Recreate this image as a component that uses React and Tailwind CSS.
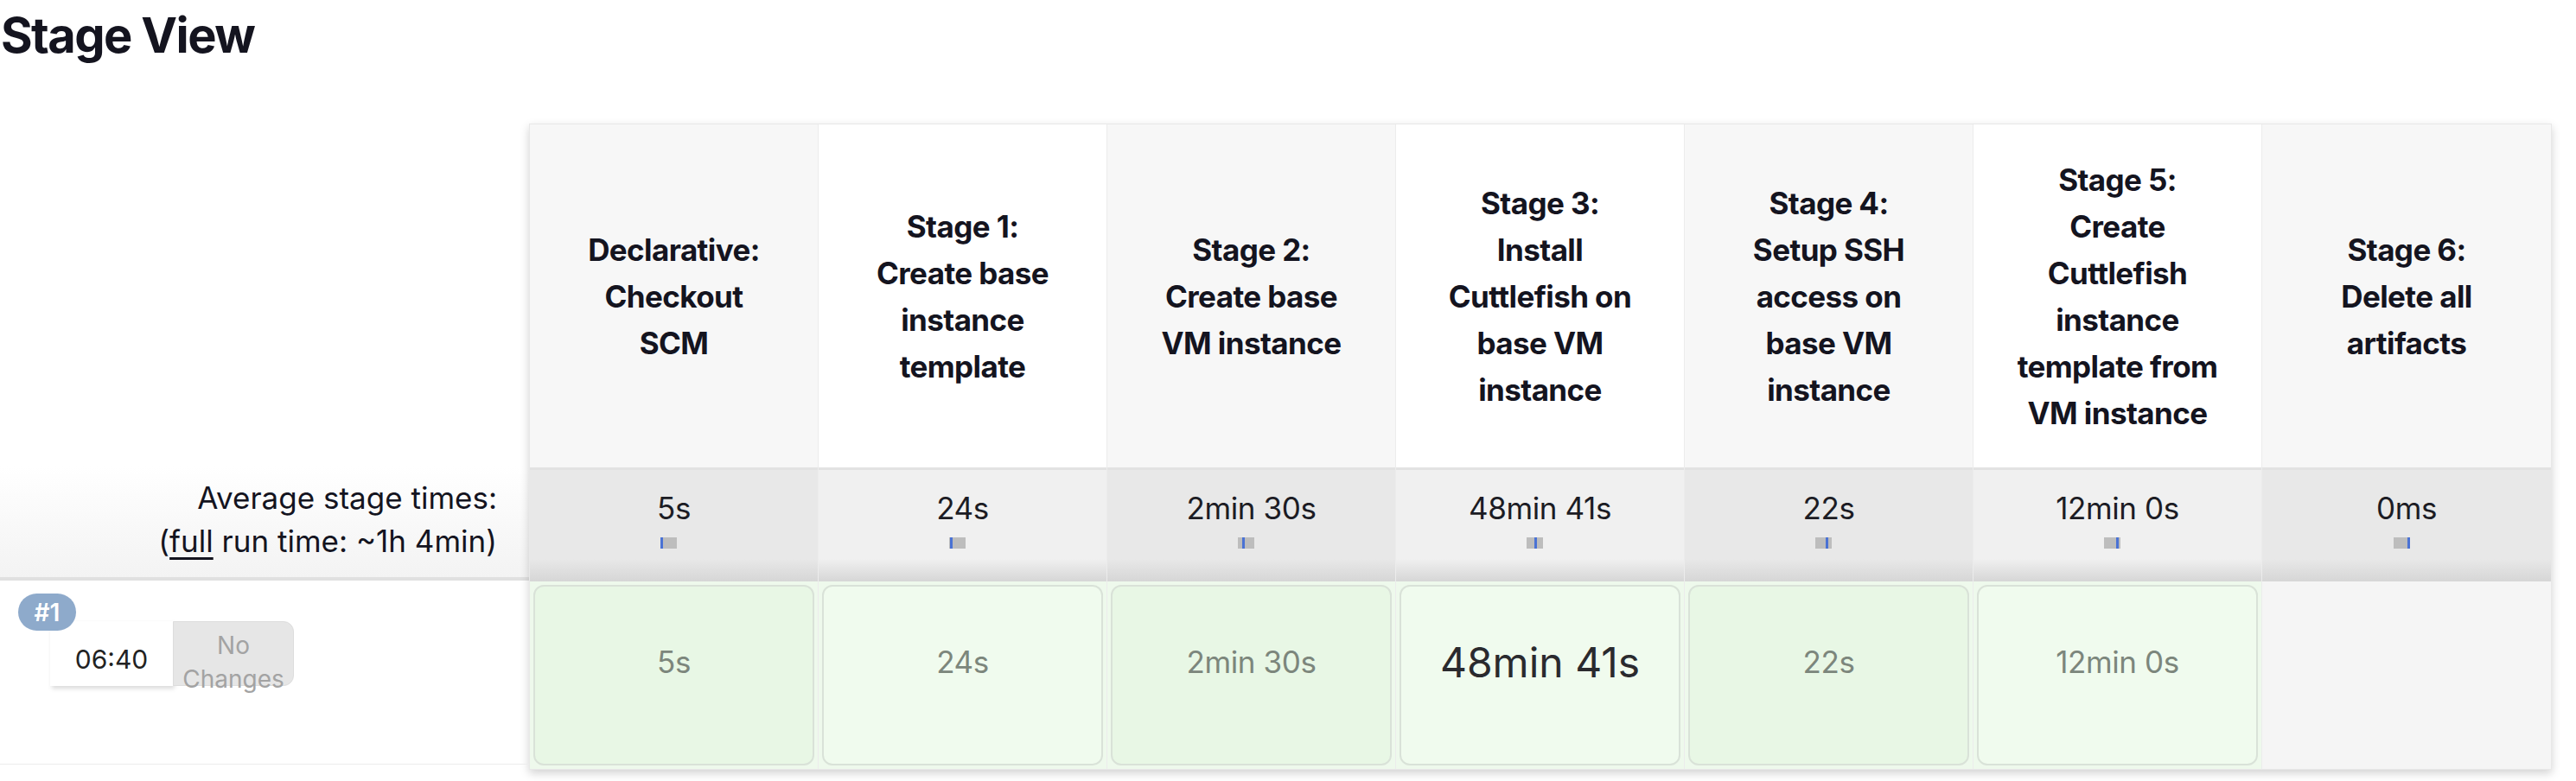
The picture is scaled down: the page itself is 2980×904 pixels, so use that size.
import React from "react";

const stages = [
  { lines: ["Declarative:", "Checkout", "SCM"], avg: "5s", mark: "left-[0px]", run: "5s" },
  { lines: ["Stage 1:", "Create base", "instance", "template"], avg: "24s", mark: "left-[1px]", run: "24s" },
  { lines: ["Stage 2:", "Create base", "VM instance"], avg: "2min 30s", mark: "left-[5px]", run: "2min 30s" },
  { lines: ["Stage 3:", "Install", "Cuttlefish on", "base VM", "instance"], avg: "48min 41s", mark: "left-[9px]", run: "48min 41s", big: true },
  { lines: ["Stage 4:", "Setup SSH", "access on", "base VM", "instance"], avg: "22s", mark: "left-[12px]", run: "22s" },
  { lines: ["Stage 5:", "Create", "Cuttlefish", "instance", "template from", "VM instance"], avg: "12min 0s", mark: "left-[14px]", run: "12min 0s" },
  { lines: ["Stage 6:", "Delete all", "artifacts"], avg: "0ms", mark: "left-[16px]", run: null },
];

function App() {
  return (
    <div className="w-[2980px] h-[904px] bg-white overflow-hidden font-['Inter','Noto_Sans',sans-serif] text-[#14141f]">
      {/* Title */}
      <h2 className="text-[56px] leading-[56px] font-bold tracking-[-1.6px] mt-[13px] ml-[1px]">Stage View</h2>

      <div className="flex mt-[74px]">
        {/* Left labels column */}
        <div className="w-[612px] flex flex-col">
          <div className="h-[397px]" />
          <div className="h-[132px] flex flex-col justify-center items-end pr-[37px] pb-[6px] text-[35px] leading-[50px] bg-gradient-to-b from-white to-[#f3f3f3] border-b-[4px] border-[#e0e0e0]">
            <div>Average stage times:</div>
            <div>
              (<span className="underline underline-offset-[6px] decoration-[3px]">full</span> run time: ~1h 4min)
            </div>
          </div>
          <div className="relative h-[213px] border-b border-[#ececec]">
            <div className="absolute left-[21px] top-[15px] z-10 h-[43px] w-[67px] rounded-full bg-[#8eaacb] text-white text-[28px] font-semibold flex items-center justify-center">
              #1
            </div>
            <div className="absolute left-[58px] top-[47px] flex">
              <div className="w-[142px] h-[75px] bg-white shadow-[2px_3px_5px_rgba(0,0,0,0.15)] flex items-center justify-center pt-[14px] text-[30px] text-[#222]">
                06:40
              </div>
              <div className="w-[140px] h-[75px] bg-[#e6e6e6] rounded-r-[12px] border border-[#dddddd] flex flex-col items-center text-[28px] leading-[39px] text-[#a3a3a3] pt-[8px]">
                <div>No</div>
                <div>Changes</div>
              </div>
            </div>
          </div>
        </div>

        {/* Stage table */}
        <div className="flex shadow-[0_4px_10px_rgba(0,0,0,0.18)] border border-[#e8e8e8]">
          {stages.map((s, i) => {
            const odd = i % 2 === 0;
            return (
              <div key={i} className="w-[334px] flex flex-col border-r border-[#ececec] last:border-r-0">
                <div className={`h-[397px] flex flex-col items-center justify-center text-center text-[35px] leading-[54px] font-bold tracking-[-0.6px] ${odd ? "bg-[#f7f7f7]" : "bg-white"}`}>
                  {s.lines.map((l, j) => (
                    <div key={j}>{l}</div>
                  ))}
                </div>
                <div className={`h-[132px] border-t-[3px] border-[#e2e2e2] flex flex-col items-center pt-[24px] ${odd ? "bg-[#e8e8e8]" : "bg-[#f0f0f0]"}`}>
                  <div className="text-[35px] leading-[40px] text-[#1c1c24] tracking-[-0.4px]">{s.avg}</div>
                  <div className="relative mt-[14px] -ml-[12px] w-[19px] h-[13px] bg-[#bdbdbd]">
                    <div className={`absolute top-0 ${s.mark} w-[3px] h-[13px] bg-[#4a72d4]`} />
                  </div>
                  <div className="mt-auto h-[26px] w-full bg-gradient-to-b from-transparent to-[#d6d6d6]" />
                </div>
                <div className={`h-[217px] p-[4px] ${s.run ? "bg-[#eef9ec]" : "bg-[#f5f5f5]"}`}>
                  {s.run && (
                    <div className={`h-full rounded-[12px] border-2 border-[#d9e2d8] flex items-center justify-center pb-[30px] ${odd ? "bg-[#e8f7e5]" : "bg-[#f0fbee]"}`}>
                      {s.big ? (
                        <span className="text-[48px] text-[#2a2a2e]">{s.run}</span>
                      ) : (
                        <span className="text-[35px] text-[#7c867c] tracking-[-0.4px]">{s.run}</span>
                      )}
                    </div>
                  )}
                </div>
              </div>
            );
          })}
        </div>
      </div>
    </div>
  );
}

export default App;
